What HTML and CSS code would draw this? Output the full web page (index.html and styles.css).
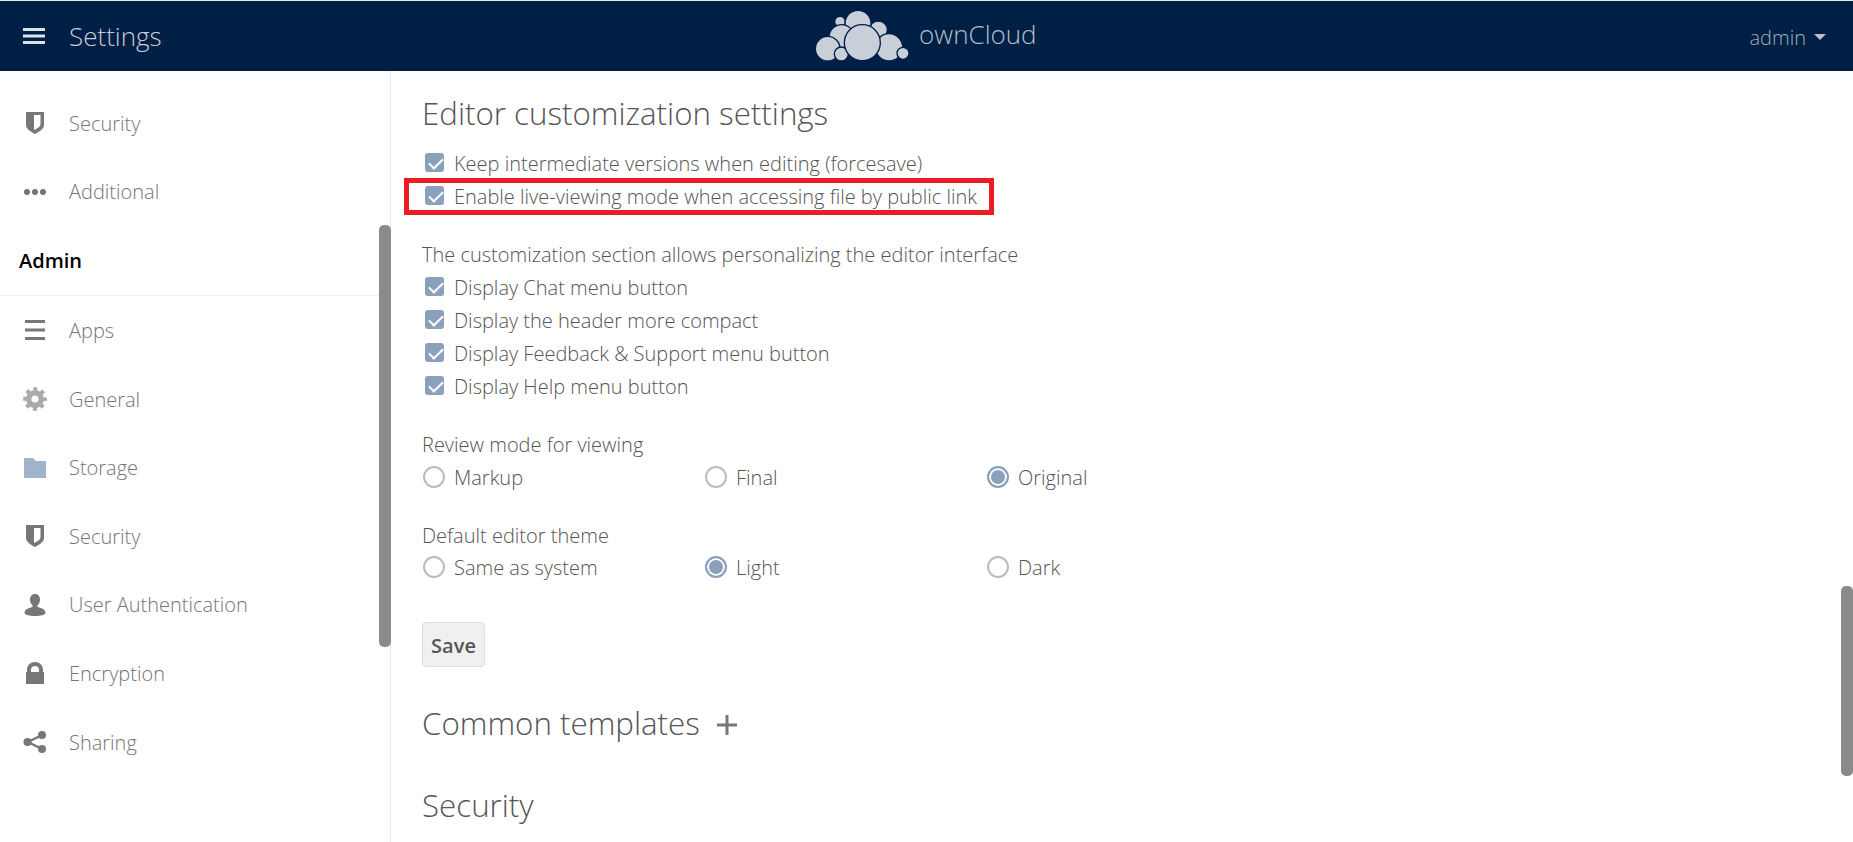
FILE: index.html
```html
<!DOCTYPE html>
<html>
	<head>
		<meta charset="utf-8">
		<title>Settings - ownCloud</title>
		<link rel="stylesheet" href="styles.css">
	</head>
	<body>
		<header id="header">
			<div class="header-left">
				<svg class="burger" viewBox="0 0 22 16"><path d="M0 0h22v3H0zM0 6.500h22v3H0zM0 13h22v3H0z"/></svg>
				<span class="app-title">Settings</span>
			</div>
			<div class="logo">
				<svg class="logo-cloud" viewBox="108 28 284 156">
					<circle cx="183" cy="63" r="16"/>
					<circle cx="298" cy="88" r="27"/>
					<circle cx="237" cy="68" r="39"/>
					<circle cx="188" cy="110" r="38"/>
					<circle cx="146" cy="144" r="37"/>
					<circle cx="330" cy="140" r="41"/>
					<circle cx="372" cy="158" r="18"/>
					<circle cx="187" cy="160" r="21"/>
					<circle cx="250" cy="126" r="54"/>
				</svg>
				<span class="logo-text">ownCloud</span>
			</div>
			<div class="header-right">
				<span class="user">admin</span>
				<span class="caret"></span>
			</div>
		</header>
		<div class="view">
			<aside class="sidebar">
				<ul class="nav">
					<li>
						<svg class="icon" viewBox="0 0 24 24"><path fill-rule="evenodd" d="M3 1h18v13c0 4-5 7-9 9-4-2-9-5-9-9zM11 4v15c3-1.500 6.500-3 6.500-6V4z"/></svg>
						Security
					</li>
					<li>
						<svg class="icon" viewBox="0 0 24 24"><circle cx="4" cy="12" r="3"/><circle cx="12" cy="12" r="3"/><circle cx="20" cy="12" r="3"/></svg>
						Additional
					</li>
					<li class="nav-head">Admin</li>
					<li>
						<svg class="icon" viewBox="0 0 24 24"><path d="M2 2h20v3H2zM2 10.500h20v3H2zM2 19h20v3H2z"/></svg>
						Apps
					</li>
					<li>
						<svg class="icon gear" viewBox="0 0 24 24">
							<circle class="gear-ring" cx="12" cy="12" r="6.300"/>
							<circle class="gear-teeth" cx="12" cy="12" r="9.800"/>
						</svg>
						General
					</li>
					<li>
						<svg class="icon folder" viewBox="0 0 24 24"><path d="M1 2h9l3 3h10v17H1z"/></svg>
						Storage
					</li>
					<li>
						<svg class="icon" viewBox="0 0 24 24"><path fill-rule="evenodd" d="M3 1h18v13c0 4-5 7-9 9-4-2-9-5-9-9zM11 4v15c3-1.500 6.500-3 6.500-6V4z"/></svg>
						Security
					</li>
					<li>
						<svg class="icon" viewBox="0 0 24 24"><path d="M12 1c3.300 0 5 2.600 5 5.500 0 2.500-1 4.500-2.500 5.800v1.700c3 .7 8 2 8 6 0 2-5 3-10.500 3S1.500 22 1.500 20c0-4 5-5.300 8-6v-1.700C8 11 7 9 7 6.500 7 3.600 8.700 1 12 1z"/></svg>
						User Authentication
					</li>
					<li>
						<svg class="icon" viewBox="0 0 24 24"><path fill-rule="evenodd" d="M4 11V9c0-5 3.500-8 8-8s8 3 8 8v2h1v12H3V11zM8 11h8V9c0-2.500-1.700-4-4-4S8 6.500 8 9z"/></svg>
						Encryption
					</li>
					<li>
						<svg class="icon" viewBox="0 0 24 24"><path class="share-line" d="M19 5 5 12l14 7"/><circle cx="19" cy="5" r="4"/><circle cx="4.500" cy="12" r="4"/><circle cx="19" cy="19" r="4"/></svg>
						Sharing
					</li>
				</ul>
				<div class="scroll-thumb side-thumb"></div>
			</aside>
			<section class="content">
				<h2>Editor customization settings</h2>
				<label class="row"><input type="checkbox" checked>Keep intermediate versions when editing (forcesave)</label>
				<label class="row"><input type="checkbox" checked>Enable live-viewing mode when accessing file by public link</label>
				<div class="highlight"></div>

				<p class="row group">The customization section allows personalizing the editor interface</p>
				<label class="row"><input type="checkbox" checked>Display Chat menu button</label>
				<label class="row"><input type="checkbox" checked>Display the header more compact</label>
				<label class="row"><input type="checkbox" checked>Display Feedback &amp; Support menu button</label>
				<label class="row"><input type="checkbox" checked>Display Help menu button</label>

				<p class="row group">Review mode for viewing</p>
				<div class="radios">
					<label><input type="radio" name="review">Markup</label>
					<label><input type="radio" name="review">Final</label>
					<label><input type="radio" name="review" checked>Original</label>
				</div>

				<p class="row group">Default editor theme</p>
				<div class="radios theme">
					<label><input type="radio" name="theme">Same as system</label>
					<label><input type="radio" name="theme" checked>Light</label>
					<label><input type="radio" name="theme">Dark</label>
				</div>

				<button class="save">Save</button>

				<h2 class="templates">Common templates
					<svg class="plus" viewBox="0 0 20 20"><path d="M8.500 0h3v8.500H20v3h-8.500V20h-3v-8.500H0v-3h8.500z"/></svg>
				</h2>
				<h2 class="security">Security</h2>
				<div class="scroll-thumb main-thumb"></div>
			</section>
		</div>
	</body>
</html>
```

FILE: styles.css
```css
* {
	box-sizing: border-box;
}

html, body {
	height: 100%;
}

body {
	margin: 0;
	overflow: hidden;
	background-color: white;
	color: #555;
	font-family: "Open Sans", "Liberation Sans", sans-serif;
	font-size: 20px;
	font-weight: 300;
}

#header {
	display: flex;
	align-items: center;
	height: 71px;
	border-top: 1px solid #e4e6ea;
	background-color: #001f45;
}

.header-left {
	flex: 1;
	display: flex;
	align-items: center;
	padding-left: 23px;
	gap: 24px;
}

.burger {
	width: 22px;
	height: 16px;
	fill: #dde1e8;
}

.app-title {
	font-size: 26px;
	color: #c5ccd7;
}

.logo {
	display: flex;
	align-items: center;
	gap: 9px;
	margin-left: 3px;
}

.logo-cloud {
	width: 94.700px;
	height: 52px;
	fill: #c9cfd9;
	stroke: #001f45;
	stroke-width: 4;
}

.logo-text {
	font-size: 26px;
	color: #b4bdcb;
	position: relative;
	top: -2px;
}

.header-right {
	flex: 1;
	display: flex;
	align-items: center;
	justify-content: flex-end;
	gap: 8px;
	padding-right: 27px;
	padding-top: 2px;
	color: #a3adbc;
}

.caret {
	width: 0;
	height: 0;
	border-left: 6px solid transparent;
	border-right: 6px solid transparent;
	border-top: 6px solid #b9c0cb;
}

.view {
	display: flex;
	height: 771px;
}

.sidebar {
	position: relative;
	flex: none;
	width: 391px;
	height: 100%;
	border-right: 1px solid #e8e8e8;
}

.nav {
	list-style: none;
	margin: 0;
	padding: 18px 0 0;
}

.nav li {
	display: flex;
	align-items: center;
	height: 68.600px;
	padding-left: 23px;
	gap: 22px;
	color: #757575;
}

.nav li.nav-head {
	height: 70px;
	margin-right: 11px;
	padding-left: 19px;
	border-bottom: 1px solid #eee;
	color: black;
	font-weight: 600;
}

.icon {
	flex: none;
	width: 24px;
	height: 24px;
	fill: #777;
}

.gear {
	fill: none;
}

.gear-ring {
	stroke: #aaa;
	stroke-width: 5.500;
}

.gear-teeth {
	stroke: #aaa;
	stroke-width: 4;
	stroke-dasharray: 3.900 3.800;
	stroke-dashoffset: 2;
}

.folder {
	fill: #a1b3cc;
}

.share-line {
	fill: none;
	stroke: #777;
	stroke-width: 2.500;
}

.scroll-thumb {
	position: absolute;
	right: 0;
	width: 12px;
	border-radius: 5px;
	background-color: #8a8a8a;
}

.side-thumb {
	top: 154px;
	right: -1px;
	height: 422px;
}

.main-thumb {
	top: 515px;
	height: 190px;
}

.content {
	position: relative;
	flex: 1;
	padding: 22px 0 0 31px;
}

h2 {
	margin: 0;
	font-size: 31.300px;
	font-weight: 300;
	line-height: 40px;
	color: #555;
}

h2 + .row {
	margin-top: 14px;
}

.row {
	display: flex;
	align-items: center;
	height: 33px;
	margin: 0;
}

.group {
	margin-top: 25px;
}

input {
	appearance: none;
	flex: none;
	margin: 0;
}

input[type=checkbox] {
	position: relative;
	width: 19px;
	height: 19px;
	margin: -2px 10px 0 3px;
	border-radius: 3px;
	background-color: #8aa0bd;
}

input[type=checkbox]::after {
	content: "";
	position: absolute;
	left: 6.500px;
	top: 2px;
	width: 6px;
	height: 12px;
	border: solid white;
	border-width: 0 2.500px 2.500px 0;
	transform: rotate(45deg);
}

input[type=radio] {
	width: 22px;
	height: 22px;
	margin: -2px 9px 0 1px;
	border: 2px solid #bbb;
	border-radius: 50%;
}

input[type=radio]:checked {
	border-color: #8aa0bd;
	background-color: #8aa0bd;
	box-shadow: inset 0 0 0 2px white;
}

.radios {
	display: grid;
	grid-template-columns: 282px 282px auto;
	height: 33px;
	align-items: center;
}

.radios.theme {
	margin-top: -1px;
}

.radios label {
	display: flex;
	align-items: center;
}

.highlight {
	position: absolute;
	left: 13px;
	top: 107px;
	width: 590px;
	height: 37px;
	border: 5px solid #ed1c24;
}

.save {
	display: block;
	width: 63px;
	height: 45px;
	margin-top: 38px;
	padding: 2px 0 0;
	border: 1px solid #ddd;
	border-radius: 4px;
	background-color: #f0f0f0;
	color: #555;
	font-family: inherit;
	font-size: 20px;
	font-weight: 600;
}

.templates {
	display: flex;
	align-items: center;
	gap: 17px;
	margin-top: 36px;
}

.plus {
	width: 20px;
	height: 20px;
	margin-top: 4px;
	fill: #777;
}

.security {
	margin-top: 42px;
}
```
